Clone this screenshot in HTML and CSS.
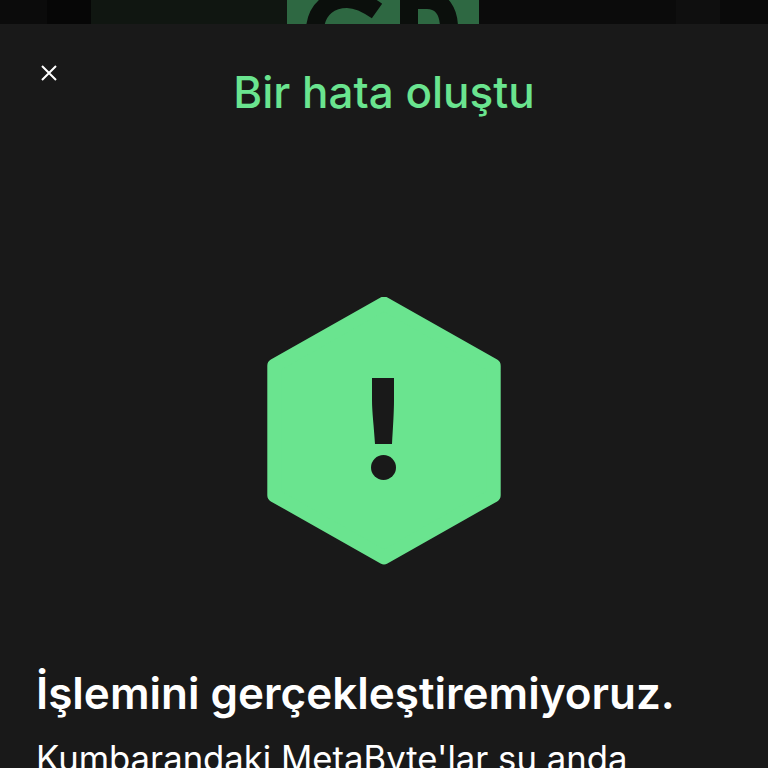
FILE: index.html
```html
<html>
  <head>
    <title>Bir hata oluştu</title>
    <link rel="stylesheet" href="styles.css">
  </head>

  <body>
    <div class="backdrop">
      <div class="strip strip-a"></div>
      <div class="strip strip-b"></div>
      <div class="strip strip-c"></div>
      <div class="tile">
        <svg width="192" height="24" viewBox="0 0 192 24">
          <path d="M28 28C30 8 44 -1 60 -1C70 -1 80 4 90 11" class="tile-line"/>
          <path d="M122 24V0H140C155 0 162 12 162 28" class="tile-line"/>
        </svg>
      </div>
      <div class="strip strip-d"></div>
      <div class="strip strip-e"></div>
      <div class="strip strip-f"></div>
    </div>

    <div class="sheet">
      <header class="sheet-head">
        <button class="close" aria-label="Kapat">
          <svg width="18" height="18" viewBox="0 0 18 18">
            <path d="M2 2L16 16M16 2L2 16"/>
          </svg>
        </button>
        <h2>Bir hata oluştu</h2>
      </header>

      <div class="alert-icon">
        <svg width="234" height="268" viewBox="0 0 234 268">
          <polygon class="hex" points="117,6.600 226.700,68.700 226.700,198.300 117,260.400 7.300,198.300 7.300,68.700"/>
          <path class="mark" d="M105 81H127V103C127 115 126 130 125 147H108C107 130 105 115 105 103Z"/>
          <circle class="mark" cx="116.500" cy="170.500" r="12.500"/>
        </svg>
      </div>

      <h1>İşlemini gerçekleştiremiyoruz.</h1>
      <p>Kumbarandaki MetaByte'lar şu anda</p>
    </div>
  </body>
</html>
```

FILE: styles.css
```css
body {
  margin: 0;
  height: 768px;
  overflow: hidden;
  background: #191919;
  font-family: "Inter", "Noto Sans", sans-serif;
}

.backdrop {
  display: flex;
  height: 24px;
  background: #0c0c0c;
}

.strip-a { width: 47px; background: #0b0b0b; }
.strip-b { width: 44px; background: #060606; }
.strip-c { width: 196px; background: #101611; }

.tile {
  width: 192px;
  height: 24px;
  background: #2e6842;
}

.tile svg {
  display: block;
}

.tile-line {
  fill: none;
  stroke: #0b0f0c;
  stroke-width: 18;
}

.strip-d { width: 197px; background: #0b0b0b; }
.strip-e { width: 44px; background: #0f0f0f; }
.strip-f { flex: 1; background: #0a0a0a; }

.sheet {
  padding: 0 36px;
}

.sheet-head {
  display: flex;
  justify-content: center;
  position: relative;
  padding-top: 41px;
}

.close {
  position: absolute;
  left: 4px;
  top: 40px;
  width: 18px;
  height: 18px;
  padding: 0;
  border: none;
  background: none;
}

.close svg {
  display: block;
}

.close path {
  fill: none;
  stroke: #fff;
  stroke-width: 2;
}

h2 {
  margin: 0;
  font-size: 44px;
  line-height: 54px;
  font-weight: 500;
  color: #6ae48f;
}

.alert-icon {
  display: flex;
  justify-content: center;
  padding-top: 178px;
}

.alert-icon svg {
  display: block;
}

.hex {
  fill: #6ae48f;
  stroke: #6ae48f;
  stroke-width: 14;
  stroke-linejoin: round;
}

.mark {
  fill: #191919;
}

h1 {
  margin: 98px 0 0;
  font-size: 44px;
  line-height: 60px;
  font-weight: 600;
  color: #fff;
  white-space: nowrap;
}

p {
  margin: 13px 0 0;
  font-size: 34.700px;
  line-height: 44px;
  color: #fff;
  white-space: nowrap;
}
```
